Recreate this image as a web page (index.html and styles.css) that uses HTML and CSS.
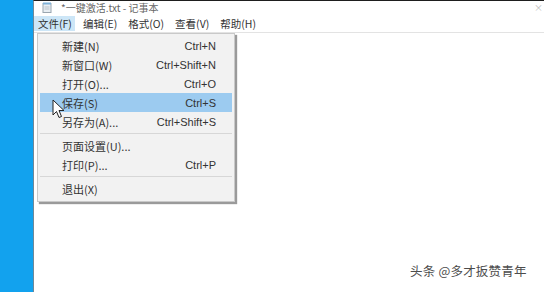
FILE: index.html
```html
<!DOCTYPE html>
<html lang="zh-CN">
<head>
    <meta charset="UTF-8">
    <meta name="viewport" content="width=device-width, initial-scale=1.0">
    <title>*一键激活.txt - 记事本</title>
    <link rel="stylesheet" href="styles.css">
</head>
<body>
    <div class="desktop"></div>
    <div class="window">
        <div class="titlebar">
            <svg class="app-icon" width="10" height="11" viewBox="0 0 10 11">
                <rect x="1" y="1.5" width="8" height="9" fill="#e8eef3" stroke="#9aa6b0" stroke-width="1"/>
                <rect x="1" y="0.5" width="8" height="2" fill="#7fb2d9"/>
                <line x1="2.5" y1="5" x2="7.5" y2="5" stroke="#b9c2c9"/>
                <line x1="2.5" y1="7" x2="7.5" y2="7" stroke="#b9c2c9"/>
            </svg>
            <span class="title">*一键激活.txt - 记事本</span>
            <span class="close-mark">×</span>
        </div>
        <div class="menubar">
            <span class="menu-item active">文件(F)</span>
            <span class="menu-item">编辑(E)</span>
            <span class="menu-item">格式(O)</span>
            <span class="menu-item">查看(V)</span>
            <span class="menu-item">帮助(H)</span>
        </div>
        <div class="editor"></div>

        <div class="dropdown">
            <div class="row"><span>新建(N)</span><span class="key">Ctrl+N</span></div>
            <div class="row"><span>新窗口(W)</span><span class="key">Ctrl+Shift+N</span></div>
            <div class="row"><span>打开(O)...</span><span class="key">Ctrl+O</span></div>
            <div class="row selected"><span>保存(S)</span><span class="key">Ctrl+S</span></div>
            <div class="row"><span>另存为(A)...</span><span class="key">Ctrl+Shift+S</span></div>
            <div class="sep"></div>
            <div class="row"><span>页面设置(U)...</span><span class="key"></span></div>
            <div class="row"><span>打印(P)...</span><span class="key">Ctrl+P</span></div>
            <div class="sep"></div>
            <div class="row"><span>退出(X)</span><span class="key"></span></div>
        </div>

        <svg class="cursor" width="13" height="21" viewBox="0 0 13 21">
            <path d="M1 1 L1 16 L4.5 12.5 L7 18.5 L9.5 17.5 L7 11.5 L12 11.5 Z" fill="#fff" stroke="#222" stroke-width="1" stroke-linejoin="round"/>
        </svg>
    </div>
    <div class="watermark">头条 @多才扳赞青年</div>
</body>
</html>
```

FILE: styles.css
```css
body {
    margin: 0;
    padding: 0;
    width: 544px;
    height: 292px;
    overflow: hidden;
    display: flex;
    font-family: "Noto Sans CJK SC", "Liberation Sans", sans-serif;
    background-color: #fff;
    position: relative;
}
.desktop {
    width: 33px;
    flex-shrink: 0;
    background-color: #12a2ee;
}
.window {
    flex: 1;
    position: relative;
    display: flex;
    flex-direction: column;
    border-top: 1px solid #1e1e1e;
    border-left: 1px solid #6f8898;
    background-color: #fff;
}
.titlebar {
    height: 13px;
    display: flex;
    align-items: center;
    padding-left: 8px;
    color: #666;
    font-size: 10px;
}
.app-icon {
    margin-right: 9px;
}
.title {
    line-height: 13px;
}
.close-mark {
    margin-left: auto;
    margin-right: 1px;
    color: #bbb;
    font-size: 9px;
}
.menubar {
    height: 18px;
    display: flex;
    align-items: center;
    padding-left: 0;
    border-bottom: 1px solid #e3e3e3;
    font-size: 10.5px;
    color: #333;
}
.menu-item {
    padding: 0 3px 0 4px;
    margin-right: 4px;
    line-height: 15px;
}
.menu-item.active {
    background-color: #cde6f7;
}
.editor {
    flex: 1;
}
.dropdown {
    position: absolute;
    left: 3px;
    top: 32px;
    width: 192px;
    padding: 2px 2px 3px 2px;
    background-color: #f2f2f2;
    border: 1px solid #c9c9c9;
    box-shadow: 2px 2px 1px #9a9a9a;
    font-size: 11px;
    color: #333;
}
.row {
    height: 19px;
    display: flex;
    align-items: center;
    justify-content: space-between;
    padding: 0 16px 0 22px;
}
.row.selected {
    background-color: #9ccbf0;
}
.key {
    font-family: "Liberation Sans", sans-serif;
}
.sep {
    height: 1px;
    margin: 2px 0 2px 0;
    background-color: #d7d7d7;
}
.cursor {
    position: absolute;
    left: 18px;
    top: 98px;
}
.watermark {
    position: absolute;
    left: 410px;
    top: 261px;
    font-size: 12.5px;
    color: #4c4c4c;
    text-shadow: 0 0 2px #fff;
    letter-spacing: 0.2px;
}
```
